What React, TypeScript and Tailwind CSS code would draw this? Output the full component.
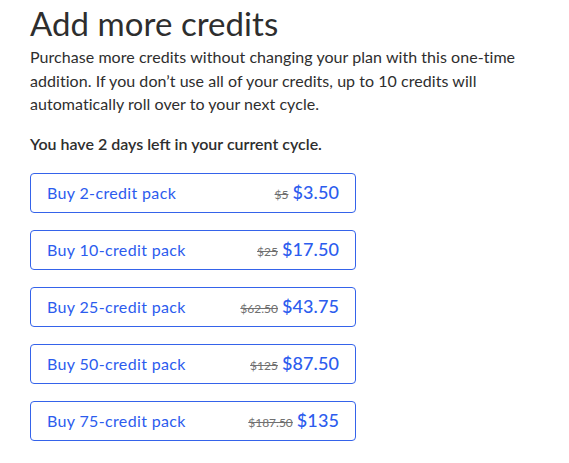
import { type ReactNode } from "react";

type Pack = {
  credits: number;
  was: string;
  now: string;
};

const PACKS: Pack[] = [
  { credits: 2, was: "$5", now: "$3.50" },
  { credits: 10, was: "$25", now: "$17.50" },
  { credits: 25, was: "$62.50", now: "$43.75" },
  { credits: 50, was: "$125", now: "$87.50" },
  { credits: 75, was: "$187.50", now: "$135" },
];

function PackButton({ children, was, now }: { children: ReactNode; was: string; now: string }) {
  return (
    <button
      type="button"
      className="flex h-[40px] w-[326px] items-center justify-between rounded-[4px] border border-[#3563ea] bg-white pl-[16px] pr-[16px] text-[16px] tracking-[0.35px] text-[#2c5cee]"
    >
      <span>{children}</span>
      <span className="flex items-baseline gap-[4px]">
        <span className="text-[12px] tracking-normal text-[#707070] line-through">{was}</span>
        <span className="text-[18px] font-medium tracking-[0.1px]">{now}</span>
      </span>
    </button>
  );
}

export default function App() {
  return (
    <div className="min-h-[463px] bg-white pl-[30px] pt-[5px] font-['Lato',sans-serif] text-[#2e2e2e]">
      <h1 className="text-[33px] leading-[36px] font-normal tracking-[0.05px]">Add more credits</h1>
      <p className="mt-[4px] w-[520px] text-[16px] leading-[23.5px] tracking-[0.05px]">
        Purchase more credits without changing your plan with this one-time addition. If you don’t use all of
        your credits, up to 10 credits will automatically roll over to your next cycle.
      </p>
      <p className="mt-[17px] text-[16px] leading-[22px] font-semibold">
        You have 2 days left in your current cycle.
      </p>
      <div className="mt-[18px] flex flex-col gap-[17px]">
        {PACKS.map((p) => (
          <PackButton key={p.credits} was={p.was} now={p.now}>
            Buy {p.credits}-credit pack
          </PackButton>
        ))}
      </div>
    </div>
  );
}
